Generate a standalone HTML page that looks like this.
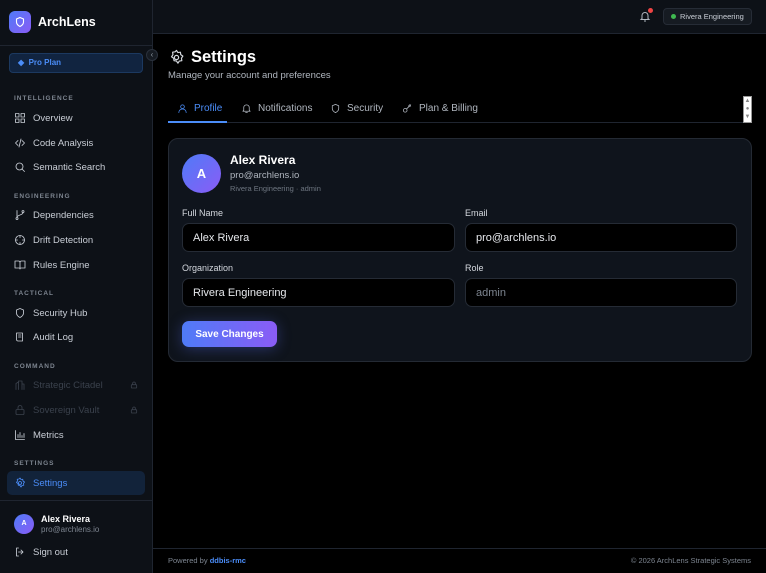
<!DOCTYPE html>
<html><head><meta charset="utf-8"><style>
*{box-sizing:border-box;margin:0;padding:0}
body{width:766px;height:573px;background:#000;font-family:"Liberation Sans",sans-serif;color:#e6e8ec;position:relative;overflow:hidden}
.a{position:absolute}
.sb{left:0;top:0;width:153px;height:573px;background:#0d1117;border-right:1px solid #1f2530}
.lbl{font-size:6.5px;font-weight:bold;letter-spacing:1px;color:#7d8590;left:14px}
.it{left:14px;font-size:9.5px;color:#c9ced6;display:flex;align-items:center;gap:7px;height:14px}
.it svg{width:12px;height:12px;fill:none;stroke:currentColor;stroke-width:1.7;stroke-linecap:round;stroke-linejoin:round}
.dis{color:#3a414c}
.top{left:153px;top:0;width:613px;height:34px;background:#0d1117;border-bottom:1px solid #1f2530}
.tab{top:103px;font-size:10px;color:#b0b6bf;display:flex;align-items:center;gap:6px}
.tab svg{width:11px;height:11px;fill:none;stroke:currentColor;stroke-width:1.7;stroke-linecap:round;stroke-linejoin:round}
.fl{font-size:9px;color:#d4d8de}
.in{height:29px;background:#000;border:1px solid #252b35;border-radius:7px;font-size:11px;padding:8px 10px;color:#e6e8ec}
</style></head><body>
<div class="a sb"></div>
<div class="a" style="left:9px;top:11px;width:22px;height:22px;border-radius:6px;background:linear-gradient(135deg,#4f7bf7,#8a5cf6)"></div>
<svg class="a" style="left:14px;top:16px" width="12" height="12" viewBox="0 0 24 24" fill="none" stroke="#fff" stroke-width="2.2"><path d="M12 3l7 3v6c0 4-3 7-7 9-4-2-7-5-7-9V6z"/></svg>
<div class="a" style="left:38px;top:15px;font-size:12.5px;font-weight:bold;color:#fff">ArchLens</div>
<div class="a" style="left:0;top:45px;width:153px;height:1px;background:#1f2530"></div>
<div class="a" style="left:9px;top:53px;width:134px;height:20px;border-radius:4px;background:#112440;border:1px solid #1c3960"></div>
<div class="a" style="left:18px;top:58px;font-size:8px;color:#4b8df8;font-weight:bold">◆&nbsp; Pro Plan</div>
<div class="a" style="left:146px;top:49px;width:12px;height:12px;border-radius:50%;background:#161b22;border:1px solid #2a313c;font-size:8px;color:#8b949e;text-align:center;line-height:10px">‹</div>

<div class="a lbl" style="top:95px">INTELLIGENCE</div>
<div class="a it" style="top:111px"><svg viewBox="0 0 24 24"><rect x="3" y="3" width="7" height="7"/><rect x="14" y="3" width="7" height="7"/><rect x="3" y="14" width="7" height="7"/><rect x="14" y="14" width="7" height="7"/></svg>Overview</div>
<div class="a it" style="top:136px"><svg viewBox="0 0 24 24"><path d="M8 7l-5 5 5 5M16 7l5 5-5 5M14 4l-4 16"/></svg>Code Analysis</div>
<div class="a it" style="top:160px"><svg viewBox="0 0 24 24"><circle cx="11" cy="11" r="7"/><path d="M21 21l-5-5"/></svg>Semantic Search</div>
<div class="a lbl" style="top:193px">ENGINEERING</div>
<div class="a it" style="top:208px"><svg viewBox="0 0 24 24"><circle cx="6" cy="19" r="2"/><circle cx="18" cy="5" r="2"/><path d="M6 3v14M18 7c0 6-12 4-12 10"/></svg>Dependencies</div>
<div class="a it" style="top:233px"><svg viewBox="0 0 24 24"><circle cx="12" cy="12" r="9"/><path d="M12 3v4M12 17v4M3 12h4M17 12h4"/></svg>Drift Detection</div>
<div class="a it" style="top:258px"><svg viewBox="0 0 24 24"><path d="M2 4h7a3 3 0 013 3v13a2 2 0 00-2-2H2zM22 4h-7a3 3 0 00-3 3v13a2 2 0 012-2h8z"/></svg>Rules Engine</div>
<div class="a lbl" style="top:290px">TACTICAL</div>
<div class="a it" style="top:306px"><svg viewBox="0 0 24 24"><path d="M12 3l7 3v6c0 4-3 7-7 9-4-2-7-5-7-9V6z"/></svg>Security Hub</div>
<div class="a it" style="top:330px"><svg viewBox="0 0 24 24"><path d="M5 4h12v16H8a3 3 0 01-3-3zM9 8h5M9 12h5"/></svg>Audit Log</div>
<div class="a lbl" style="top:363px">COMMAND</div>
<div class="a it dis" style="top:378px"><svg viewBox="0 0 24 24"><path d="M4 21V9l5-3v15M9 21V4h7v17M16 21V10h4v11"/></svg>Strategic Citadel</div>
<svg class="a" style="left:130px;top:381px" width="8" height="8" viewBox="0 0 24 24" fill="none" stroke="#3a414c" stroke-width="2.5"><rect x="4" y="11" width="16" height="10" rx="2"/><path d="M8 11V7a4 4 0 018 0v4"/></svg>
<div class="a it dis" style="top:403px"><svg viewBox="0 0 24 24"><rect x="4" y="11" width="16" height="10" rx="2"/><path d="M8 11V7a4 4 0 018 0v4"/></svg>Sovereign Vault</div>
<svg class="a" style="left:130px;top:406px" width="8" height="8" viewBox="0 0 24 24" fill="none" stroke="#3a414c" stroke-width="2.5"><rect x="4" y="11" width="16" height="10" rx="2"/><path d="M8 11V7a4 4 0 018 0v4"/></svg>
<div class="a it" style="top:428px"><svg viewBox="0 0 24 24"><path d="M3 3v18h18M8 17v-6M12 17V7M16 17v-4M20 17v-8"/></svg>Metrics</div>
<div class="a lbl" style="top:460px">SETTINGS</div>
<div class="a" style="left:7px;top:471px;width:138px;height:24px;border-radius:5px;background:#12233a"></div>
<div class="a it" style="top:476px;color:#4b8df8"><svg viewBox="0 0 24 24"><circle cx="12" cy="12" r="3"/><path d="M12 2l2 3 3.5-.5.5 3.5 3 2-2 3 .5 3.5-3.5.5-2 3-2-3-3.5-.5-.5-3.5-3-2 2-3-.5-3.5 3.5-.5z"/></svg>Settings</div>
<div class="a" style="left:0;top:500px;width:153px;height:1px;background:#1f2530"></div>
<div class="a" style="left:14px;top:514px;width:20px;height:20px;border-radius:50%;background:linear-gradient(135deg,#4f7bf7,#8a5cf6);font-size:7px;font-weight:bold;text-align:center;line-height:20px;color:#fff">A</div>
<div class="a" style="left:41px;top:514px;font-size:9px;font-weight:bold;color:#fff">Alex Rivera</div>
<div class="a" style="left:41px;top:525px;font-size:8px;color:#7d8590">pro@archlens.io</div>
<div class="a it" style="top:545px"><svg viewBox="0 0 24 24"><path d="M9 4H5v16h4M14 8l4 4-4 4M18 12H9"/></svg>Sign out</div>

<div class="a top"></div>
<svg class="a" style="left:639px;top:10px" width="12" height="13" viewBox="0 0 24 24" fill="none" stroke="#b0b6bf" stroke-width="2"><path d="M6 16V10a6 6 0 0112 0v6l2 2H4zM10 21h4"/></svg>
<div class="a" style="left:648px;top:8px;width:5px;height:5px;border-radius:50%;background:#ef4444"></div>
<div class="a" style="left:663px;top:8px;width:89px;height:17px;border-radius:4px;background:#161b22;border:1px solid #262c36"></div>
<div class="a" style="left:671px;top:14px;width:5px;height:5px;border-radius:50%;background:#3fb950"></div>
<div class="a" style="left:680px;top:12px;font-size:7.5px;color:#c9ced6">Rivera Engineering</div>

<svg class="a" style="left:168px;top:49px" width="17" height="17" viewBox="0 0 24 24" fill="none" stroke="#d4d8de" stroke-width="1.7" stroke-linejoin="round"><circle cx="12" cy="12" r="3"/><path d="M12 2l2 3 3.5-.5.5 3.5 3 2-2 3 .5 3.5-3.5.5-2 3-2-3-3.5-.5-.5-3.5-3-2 2-3-.5-3.5 3.5-.5z"/></svg>
<div class="a" style="left:191px;top:48px;font-size:16.5px;font-weight:bold;color:#fff">Settings</div>
<div class="a" style="left:168px;top:70px;font-size:9.5px;color:#b0b6bf">Manage your account and preferences</div>
<div class="a tab" style="left:177px;color:#4b8df8"><svg viewBox="0 0 24 24"><circle cx="12" cy="8" r="4"/><path d="M4 21a8 8 0 0116 0"/></svg>Profile</div>
<div class="a tab" style="left:241px"><svg viewBox="0 0 24 24"><path d="M6 16V10a6 6 0 0112 0v6l2 2H4zM10 21h4"/></svg>Notifications</div>
<div class="a tab" style="left:330px"><svg viewBox="0 0 24 24"><path d="M12 3l7 3v6c0 4-3 7-7 9-4-2-7-5-7-9V6z"/></svg>Security</div>
<div class="a tab" style="left:402px"><svg viewBox="0 0 24 24"><circle cx="7" cy="16" r="4"/><path d="M10 13l9-9M16 4l3 3M14 6l2 2"/></svg>Plan &amp; Billing</div>
<div class="a" style="left:168px;top:122px;width:583px;height:1px;background:#1f2530"></div>
<div class="a" style="left:168px;top:121px;width:59px;height:2px;background:#4b8df8"></div>
<div class="a" style="left:743px;top:96px;width:9px;height:27px;background:#fff;border:1px solid #999;font-size:6px;color:#888;text-align:center;line-height:8px">▲<br>●<br>▼</div>

<div class="a" style="left:168px;top:138px;width:584px;height:224px;border-radius:10px;background:#0f141c;border:1px solid #242a34"></div>
<div class="a" style="left:182px;top:154px;width:39px;height:39px;border-radius:50%;background:linear-gradient(135deg,#4f7bf7,#8a5cf6);font-size:13px;font-weight:bold;text-align:center;line-height:39px;color:#fff">A</div>
<div class="a" style="left:230px;top:153px;font-size:12px;font-weight:bold;color:#fff">Alex Rivera</div>
<div class="a" style="left:230px;top:170px;font-size:9.5px;color:#b0b6bf">pro@archlens.io</div>
<div class="a" style="left:230px;top:184px;font-size:7.5px;color:#6e7681">Rivera Engineering · admin</div>
<div class="a fl" style="left:182px;top:208px">Full Name</div>
<div class="a fl" style="left:465px;top:208px">Email</div>
<div class="a in" style="left:182px;top:223px;width:273px">Alex Rivera</div>
<div class="a in" style="left:465px;top:223px;width:272px">pro@archlens.io</div>
<div class="a fl" style="left:182px;top:263px">Organization</div>
<div class="a fl" style="left:465px;top:263px">Role</div>
<div class="a in" style="left:182px;top:278px;width:273px">Rivera Engineering</div>
<div class="a in" style="left:465px;top:278px;width:272px;color:#7d8590">admin</div>
<div class="a" style="left:182px;top:321px;width:95px;height:26px;border-radius:7px;background:linear-gradient(90deg,#4f7bf7,#8a5cf6);box-shadow:0 2px 14px rgba(90,110,240,.35);font-size:10px;font-weight:bold;color:#fff;text-align:center;line-height:27px">Save Changes</div>

<div class="a" style="left:153px;top:548px;width:613px;height:1px;background:#1f2530"></div>
<div class="a" style="left:168px;top:556px;font-size:7.5px;color:#7d8590">Powered by <b style="color:#4b8df8">ddbis-rmc</b></div>
<div class="a" style="right:15px;top:556px;font-size:7.5px;color:#7d8590">© 2026 ArchLens Strategic Systems</div>
</body></html>
